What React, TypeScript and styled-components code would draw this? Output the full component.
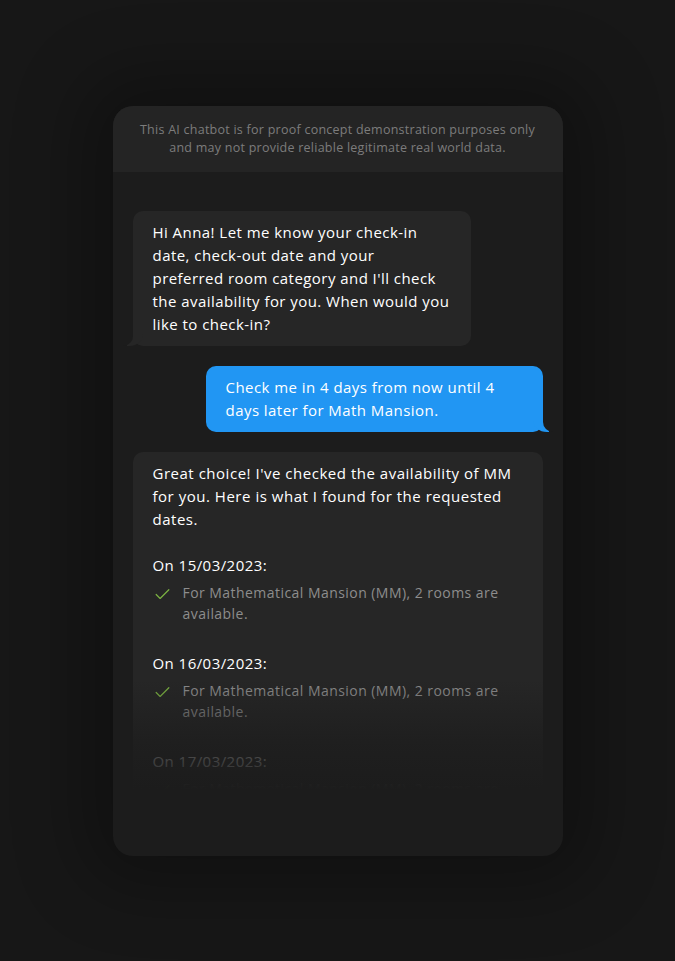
import React from "react";
import styled, { createGlobalStyle } from "styled-components";
import { Check } from "lucide-react";

const Global = createGlobalStyle`
  html, body { margin: 0; padding: 0; background: #171717; }
  body { font-family: "Open Sans", "Noto Sans", sans-serif; }
  * { box-sizing: border-box; }
`;

const Page = styled.div`
  min-height: 961px;
  display: flex;
  justify-content: center;
  padding-top: 106px;
`;

const Card = styled.div`
  width: 450px;
  height: 750px;
  border-radius: 20px;
  background: #1c1c1c;
  display: flex;
  flex-direction: column;
  overflow: hidden;
  box-shadow: 0 0 70px 30px rgba(0, 0, 0, 0.28);
`;

const Header = styled.div`
  height: 66px;
  background: #242424;
  display: flex;
  align-items: center;
  justify-content: center;
  text-align: center;
  padding: 0 20px;
  font-size: 12.5px;
  line-height: 18px;
  letter-spacing: 0.25px;
  color: #7c7c7c;
`;

const Messages = styled.div`
  position: relative;
  height: 618px;
  overflow: hidden;
  padding: 39px 20px 0;
  display: flex;
  flex-direction: column;
  gap: 20px;
`;

const Fade = styled.div`
  position: absolute;
  left: 0;
  right: 0;
  bottom: 0;
  height: 110px;
  background: linear-gradient(to bottom, rgba(28, 28, 28, 0) 0%, rgba(28, 28, 28, 0.75) 60%, #1c1c1c 100%);
  pointer-events: none;
`;

const Bubble = styled.div<{ $user?: boolean; $width: number }>`
  position: relative;
  flex-shrink: 0;
  width: ${(p) => p.$width}px;
  align-self: ${(p) => (p.$user ? "flex-end" : "flex-start")};
  background: ${(p) => (p.$user ? "#2196f3" : "#262626")};
  color: #ffffff;
  border-radius: 10px;
  padding: 10px 20px;
  font-size: 15px;
  font-weight: 500;
  line-height: 23px;
  letter-spacing: 0.45px;

  &::before {
    content: "";
    position: absolute;
    bottom: 0;
    ${(p) => (p.$user ? "right: -6px;" : "left: -6px;")}
    width: 16px;
    height: 12px;
    background: ${(p) => (p.$user ? "#2196f3" : "#262626")};
    ${(p) =>
      p.$user
        ? "border-bottom-left-radius: 14px 12px;"
        : "border-bottom-right-radius: 14px 12px;"}
    z-index: 0;
  }
  &::after {
    content: "";
    position: absolute;
    bottom: 0;
    ${(p) => (p.$user ? "right: -10px;" : "left: -10px;")}
    width: 10px;
    height: 14px;
    background: #1c1c1c;
    ${(p) =>
      p.$user
        ? "border-bottom-left-radius: 10px;"
        : "border-bottom-right-radius: 10px;"}
  }
`;

const Para = styled.p`
  margin: 0;
  letter-spacing: 0.52px;
`;

const DayBlock = styled.div`
  margin-top: 23px;
  & + & {
    margin-top: 28px;
  }
`;

const DayTitle = styled.div`
  font-size: 15px;
  line-height: 23px;
  color: #ffffff;
  font-weight: 500;
`;

const Item = styled.div`
  display: flex;
  gap: 11px;
  margin-top: 5px;
  color: #8d8d8d;
  font-weight: 400;
  font-size: 14px;
  line-height: 21px;
  letter-spacing: 0.45px;

  svg {
    flex-shrink: 0;
    margin-top: 3px;
    color: #7cb342;
  }
`;

const days = ["15/03/2023", "16/03/2023", "17/03/2023"];

const greeting =
  "Hi Anna! Let me know your check-in date, check-out date and your preferred\u00A0room category and I'll check the availability for you. When would you like to check-in?";

export default function App() {
  return (
    <>
      <Global />
      <Page>
        <Card>
          <Header>
            This AI chatbot is for proof concept demonstration purposes only and may not provide reliable legitimate real world data.
          </Header>
          <Messages>
            <Bubble $width={338}>{greeting}</Bubble>
            <Bubble $user $width={337}>
              Check me in 4 days from now until 4 days later for Math Mansion.
            </Bubble>
            <Bubble $width={410}>
              <Para>
                Great choice! I've checked the availability of MM for you. Here is what I found for the requested dates.
              </Para>
              {days.map((d) => (
                <DayBlock key={d}>
                  <DayTitle>{`On ${d}:`}</DayTitle>
                  <Item>
                    <Check size={19} strokeWidth={1.5} />
                    <span>For Mathematical Mansion (MM), 2 rooms are available.</span>
                  </Item>
                </DayBlock>
              ))}
            </Bubble>
            <Fade />
          </Messages>
        </Card>
      </Page>
    </>
  );
}
